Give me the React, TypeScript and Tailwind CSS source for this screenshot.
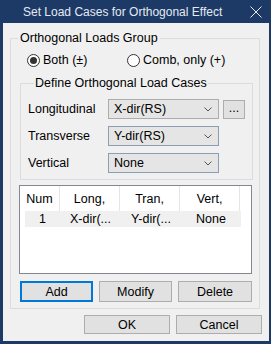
function Radio({ checked, label }: { checked?: boolean; label: string }) {
  return (
    <label className="flex items-center gap-[3px]">
      <span className="flex h-[13px] w-[13px] items-center justify-center rounded-full border border-[#333333] bg-white">
        {checked && <span className="h-[7px] w-[7px] rounded-full bg-[#333333]" />}
      </span>
      <span>{label}</span>
    </label>
  );
}

function Combo({ value, hot }: { value: string; hot?: boolean }) {
  return (
    <div
      className={`flex h-[20px] w-[111px] items-center justify-between border bg-[#e5e5e5] pl-[5px] pr-[6px] ${
        hot ? "border-[#8a9fb4]" : "border-[#acacac]"
      }`}
    >
      <span>{value}</span>
      <svg width="8" height="5" viewBox="0 0 8 5" className="stroke-[#555]" fill="none">
        <path d="M0.5 0.5 L4 4 L7.5 0.5" strokeWidth="1" />
      </svg>
    </div>
  );
}

function Btn({ label, focus, w }: { label: string; focus?: boolean; w: string }) {
  return (
    <button
      className={`flex items-center justify-center bg-[#e1e1e1] ${w} ${
        focus ? "border-2 border-[#0078d7]" : "border border-[#adadad]"
      }`}
    >
      {label}
    </button>
  );
}

const cols = [
  { head: "Num", w: "w-[40px]" },
  { head: "Long,", w: "w-[60px]" },
  { head: "Tran,", w: "w-[60px]" },
  { head: "Vert,", w: "w-[60px]" },
];

export default function App() {
  return (
    <div className="flex h-[344px] w-[271px] flex-col bg-[#1d3a66] font-['Liberation_Sans',sans-serif] text-[12.5px] leading-[14px] text-black">
      {/* Title bar */}
      <div className="flex h-[23px] shrink-0 items-center justify-between pl-[23px] pr-[9px] text-[#e4eaf2]">
        <span className="text-[12px]">Set Load Cases for Orthogonal Effect</span>
        <svg width="12" height="12" viewBox="0 0 12 12" className="stroke-[#e4eaf2]">
          <path d="M0.5 0.5 L11.5 11.5 M11.5 0.5 L0.5 11.5" strokeWidth="1" />
        </svg>
      </div>

      {/* Client */}
      <div className="mb-[3px] ml-[3px] mr-[2px] flex h-[318px] flex-col bg-[#f0f0f0] px-[7px] pt-[8px]">
        <fieldset className="w-[250px] border border-[#dcdcdc] pb-[6px]">
          <legend className="ml-[7px] px-[2px]">Orthogonal Loads Group</legend>

          <div className="mt-[8px] flex h-[14px] pl-[16px]">
            <div className="w-[100px]">
              <Radio checked label="Both (±)" />
            </div>
            <Radio label="Comb, only (+)" />
          </div>

          <fieldset className="ml-[9px] mt-[9px] w-[232px] border border-[#dcdcdc] px-[7px] pb-[6px]">
            <legend className="ml-[6px] px-[1px]">Define Orthogonal Load Cases</legend>
            <div className="mt-[9px] flex flex-col gap-[7px]">
              <div className="flex h-[20px] items-center">
                <span className="w-[80px]">Longitudinal</span>
                <Combo value="X-dir(RS)" />
                <button className="ml-[4px] flex h-[19px] w-[22px] items-center justify-center border border-[#adadad] bg-[#e1e1e1] pb-[3px]">
                  ...
                </button>
              </div>
              <div className="flex h-[20px] items-center">
                <span className="w-[80px]">Transverse</span>
                <Combo value="Y-dir(RS)" hot />
              </div>
              <div className="flex h-[20px] items-center">
                <span className="w-[80px]">Vertical</span>
                <Combo value="None" hot />
              </div>
            </div>
          </fieldset>

          {/* List view */}
          <div className="ml-[8px] mt-[5px] h-[89px] w-[233px] border border-[#828790] bg-white">
            <div className="flex h-[25px]">
              {cols.map((c) => (
                <div
                  key={c.head}
                  className={`flex items-center justify-center border-r border-[#e5e5e5] ${c.w}`}
                >
                  {c.head}
                </div>
              ))}
            </div>
            <div className="ml-[5px] flex h-[16px] w-[216px] items-center bg-[#f0f0f0]">
              <span className="w-[35px] text-center">1</span>
              <span className="w-[61px] text-center">X-dir(...</span>
              <span className="w-[60px] text-center">Y-dir(...</span>
              <span className="w-[60px] text-center">None</span>
            </div>
          </div>

          <div className="ml-[9px] mt-[7px] flex h-[21px] gap-[6px]">
            <Btn label="Add" focus w="w-[73px]" />
            <Btn label="Modify" w="w-[73px]" />
            <Btn label="Delete" w="w-[74px]" />
          </div>
        </fieldset>

        <div className="mt-[6px] flex h-[19px] justify-end gap-[6px]">
          <Btn label="OK" w="w-[86px]" />
          <Btn label="Cancel" w="w-[86px]" />
        </div>
      </div>
    </div>
  );
}
